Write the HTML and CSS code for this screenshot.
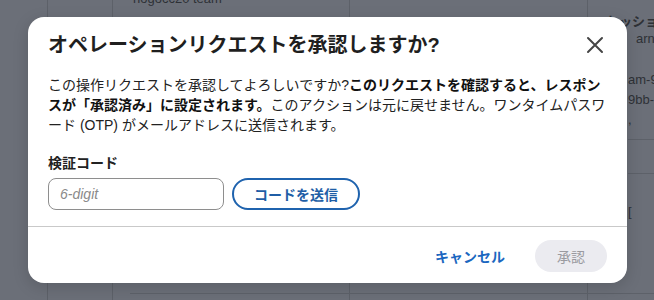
FILE: index.html
```html
<!DOCTYPE html>
<html lang="ja">
<head>
  <meta charset="UTF-8">
  <meta name="viewport" content="width=device-width, initial-scale=1.0">
  <title>オペレーションリクエストの承認</title>
  <link rel="stylesheet" href="styles.css">
</head>
<body>

<!-- Page derrière le modal (assombrie) -->
<div class="page">
  <div class="col"></div>
  <div class="col"></div>
  <div class="col"><span class="cell-text team">nogocc20 team</span></div>
  <div class="col"></div>
  <div class="col col-last">
    <span class="cell-head">セッション</span>
    <span class="cell-arn">arn</span>
    <span class="cell-id">am-9<br>9bb-<br>,</span>
    <span class="row-line"></span>
    <span class="row-line"></span>
    <span class="cell-bracket">[</span>
  </div>
  <div class="bottom-line"></div>
</div>

<!-- Modal d'approbation -->
<div class="modal">
  <div class="modal-header">
    <h2 class="modal-title">オペレーションリクエストを承認しますか?</h2>
    <button class="close" aria-label="閉じる">
      <svg width="18" height="18" viewBox="0 0 18 18">
        <path d="M2 2 L16 16 M16 2 L2 16" stroke="#454545" stroke-width="2" stroke-linecap="round" fill="none"/>
      </svg>
    </button>
  </div>

  <div class="modal-body">
    <p class="modal-text">
      この操作リクエストを承認してよろしいですか?<strong>このリクエストを確認すると、レスポンスが「承認済み」に設定されます。</strong>このアクションは元に戻せません。ワンタイムパスワード (OTP) がメールアドレスに送信されます。
    </p>

    <label class="field-label" for="otp">検証コード</label>
    <div class="field-row">
      <input id="otp" class="otp-input" type="text" placeholder="6-digit">
      <button class="btn btn-outline">コードを送信</button>
    </div>
  </div>

  <div class="modal-footer">
    <button class="btn btn-link">キャンセル</button>
    <button class="btn btn-disabled" disabled>承認</button>
  </div>
</div>

</body>
</html>
```

FILE: styles.css
```css
/* RESET & BASE */
* {
  box-sizing: border-box;
  font-family: "Liberation Sans", "Noto Sans CJK JP", sans-serif;
}
body {
  margin: 0;
  padding: 0;
  width: 654px;
  height: 300px;
  overflow: hidden;
  color: #222;
  background-color: #6b6f78;
  position: relative;
}
button {
  font: inherit;
  cursor: pointer;
}

/* BACKGROUND PAGE */
.page {
  display: grid;
  grid-template-columns: 47px 65px 237px 238px 1fr;
  height: 300px;
  position: relative;
}
.col {
  border-left: 1px solid #5d6169;
  position: relative;
}
.col:first-child { border-left: none; }
.cell-text {
  display: block;
  color: #2e3136;
  font-size: 13px;
  margin: -9px 0 0 20px;
}
.col-last {
  display: flex;
  flex-direction: column;
  padding-left: 18px;
  font-size: 13px;
  color: #2e3136;
}
.cell-head {
  font-weight: bold;
  margin-top: 11px;
  white-space: nowrap;
}
.cell-arn { margin: 1px 0 0 30px; }
.cell-id {
  margin: 24px 0 0 22px;
  line-height: 20px;
}
.row-line {
  display: block;
  height: 1px;
  background: #5d6169;
  margin: 9px -10px 24px 22px;
}
.cell-bracket { margin: 6px 0 0 22px; }
.bottom-line {
  position: absolute;
  left: 130px;
  right: 0;
  top: 293px;
  height: 1px;
  background: #5d6169;
}

/* MODAL */
.modal {
  position: absolute;
  top: 17px;
  left: 28px;
  width: 599px;
  height: 266px;
  background: #fff;
  border-radius: 16px;
  display: flex;
  flex-direction: column;
  box-shadow: 0 4px 16px rgba(0,0,0,0.15);
}
.modal-header {
  display: flex;
  align-items: center;
  justify-content: space-between;
  padding: 16px 20px 0 20px;
}
.modal-title {
  margin: 0;
  font-size: 20px;
  line-height: 24px;
  font-weight: bold;
  color: #1f1f1f;
}
.close {
  background: none;
  border: none;
  padding: 0;
  margin-right: 3px;
  width: 18px;
  height: 18px;
  display: flex;
}

.modal-body {
  padding: 18px 20px 16px 20px;
  border-bottom: 1px solid #c9c9c9;
}
.modal-text {
  margin: 0 0 18px 0;
  font-size: 14px;
  line-height: 20px;
  color: #222;
}
.modal-text strong { color: #111; }

.field-label {
  display: block;
  font-size: 14px;
  line-height: 20px;
  font-weight: bold;
  margin-bottom: 5px;
}
.field-row {
  display: flex;
  gap: 8px;
}
.otp-input {
  width: 176px;
  height: 32px;
  border: 1px solid #8e8e8e;
  border-radius: 8px;
  padding: 0 11px;
  font-size: 14px;
}
.otp-input::placeholder {
  color: #8a8a8a;
  font-style: italic;
}

/* BUTTONS */
.btn {
  height: 32px;
  border-radius: 16px;
  font-size: 14px;
  font-weight: bold;
  padding: 0 16px;
}
.btn-outline {
  width: 128px;
  background: #fff;
  border: 2px solid #1f63ae;
  color: #1f5ea6;
}
.btn-link {
  background: none;
  border: none;
  color: #1b67c0;
}
.btn-disabled {
  width: 72px;
  background: #ebebf0;
  border: none;
  color: #9a9aa0;
  font-weight: normal;
  cursor: default;
}

.modal-footer {
  display: flex;
  justify-content: flex-end;
  align-items: center;
  gap: 14px;
  padding: 13px 20px 13px 20px;
}
```
